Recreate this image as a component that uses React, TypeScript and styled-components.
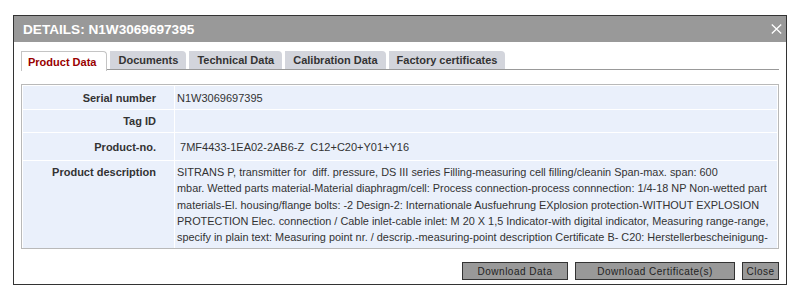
import { FC } from "react"
import styled, { createGlobalStyle } from "styled-components"

const GlobalStyle = createGlobalStyle`
  html, body {
    margin: 0;
    padding: 0;
    background: #ffffff;
    font-family: "Liberation Sans", Arial, sans-serif;
  }
`

// #region styled
const Page = styled.div`
  padding: 15px 0 0 13px;
`

const Dialog = styled.div`
  width: 772px;
  border: 1px solid #333333;
  background: #ffffff;
  display: flex;
  flex-direction: column;
`

const TitleBar = styled.div`
  height: 26px;
  background: #999999;
  display: flex;
  align-items: center;
  justify-content: space-between;
  padding: 0 4px 0 9px;
`

const Title = styled.h1`
  margin: 0;
  color: #ffffff;
  font-size: 13.6px;
  font-weight: bold;
`

const CloseIcon = styled.button`
  width: 12px;
  height: 12px;
  padding: 0;
  margin-top: -1px;
  border: 0;
  background: none;
  display: flex;
  align-items: center;
  justify-content: center;
  cursor: pointer;
`

const Body = styled.div`
  padding: 8px 7px 4px 7px;
  display: flex;
  flex-direction: column;
`

const TabBar = styled.div`
  display: flex;
  gap: 3px;
  height: 19px;
  border-bottom: 1px solid #999999;
`

const Tab = styled.div<{ $active?: boolean }>`
  box-sizing: border-box;
  height: ${p => (p.$active ? "20px" : "18px")};
  margin-top: ${p => (p.$active ? "0" : "1px")};
  padding: ${p => (p.$active ? "0 10px 0 6px" : "0 8px")};
  display: flex;
  align-items: center;
  font-size: 11px;
  font-weight: bold;
  color: ${p => (p.$active ? "#990000" : "#333333")};
  background: ${p => (p.$active ? "#ffffff" : "#d3d5dc")};
  border: ${p => (p.$active ? "1px solid #c4c4c4" : "none")};
  border-bottom: none;
  border-radius: 0 4px 0 0;
  position: relative;
  bottom: ${p => (p.$active ? "-1px" : "0")};
`

const Table = styled.div`
  margin-top: 14px;
  border: 1px solid #b9b9b9;
  background: #ffffff;
  padding: 1px 1px 0 1px;
  display: grid;
  grid-template-columns: 151px 1fr;
  gap: 1px;
`

const Label = styled.div<{ $h: number; $top?: boolean }>`
  height: ${p => p.$h}px;
  background: #eaf0fb;
  display: flex;
  align-items: ${p => (p.$top ? "flex-start" : "center")};
  justify-content: flex-end;
  padding: ${p => (p.$top ? "3px" : "0")} 18px 0 0;
  box-sizing: border-box;
  font-size: 11px;
  font-weight: bold;
  color: #333333;
  line-height: 16px;
`

const Value = styled.div<{ $h: number; $top?: boolean }>`
  height: ${p => p.$h}px;
  background: #eaf0fb;
  display: flex;
  align-items: ${p => (p.$top ? "flex-start" : "center")};
  padding: ${p => (p.$top ? "3px" : "0")} 0 0 2px;
  box-sizing: border-box;
  font-size: 11px;
  color: #333333;
  line-height: 16px;
  white-space: pre;
  overflow: hidden;
`

const Description = styled.div`
  white-space: pre;
  font-size: 10.9px;
  line-height: 16.3px;
`

const Actions = styled.div`
  margin-top: 13px;
  display: flex;
  justify-content: flex-end;
  gap: 7px;
`

const ActionButton = styled.button<{ $w: number }>`
  width: ${p => p.$w}px;
  height: 18px;
  padding: 0;
  border: 1px solid #333333;
  background: #999999;
  color: #222222;
  font-family: "Liberation Sans", Arial, sans-serif;
  font-size: 10px;
  letter-spacing: 0.5px;
  cursor: pointer;
`
// #endregion

const descriptionLines = [
  "SITRANS P, transmitter for  diff. pressure, DS III series Filling-measuring cell filling/cleanin Span-max. span: 600",
  "mbar. Wetted parts material-Material diaphragm/cell: Process connection-process connnection: 1/4-18 NP Non-wetted part",
  "materials-El. housing/flange bolts: -2 Design-2: Internationale Ausfuehrung EXplosion protection-WITHOUT EXPLOSION",
  "PROTECTION Elec. connection / Cable inlet-cable inlet: M 20 X 1,5 Indicator-with digital indicator, Measuring range-range,",
  "specify in plain text: Measuring point nr. / descrip.-measuring-point description Certificate B- C20: Herstellerbescheinigung-",
]

const tabs = ["Product Data", "Documents", "Technical Data", "Calibration Data", "Factory certificates"]

const App: FC = () => (
  <>
    <GlobalStyle />
    <Page>
      <Dialog>
        <TitleBar>
          <Title>DETAILS: N1W3069697395</Title>
          <CloseIcon aria-label="Close">
            <svg width="11" height="10" viewBox="0 0 11 10">
              <path d="M0.8 0.5 L10.2 9.5 M10.2 0.5 L0.8 9.5" stroke="#ffffff" strokeWidth="1.3" fill="none" />
            </svg>
          </CloseIcon>
        </TitleBar>
        <Body>
          <TabBar>
            {tabs.map((t, i) => (
              <Tab key={t} $active={i === 0}>{t}</Tab>
            ))}
          </TabBar>
          <Table>
            <Label $h={23}>Serial number</Label>
            <Value $h={23}>N1W3069697395</Value>
            <Label $h={22}>Tag ID</Label>
            <Value $h={22} />
            <Label $h={27}>Product-no.</Label>
            <Value $h={27}> 7MF4433-1EA02-2AB6-Z  C12+C20+Y01+Y16</Value>
            <Label $h={87} $top>Product description</Label>
            <Value $h={87} $top>
              <Description>
                {descriptionLines.map(l => <div key={l}>{l}</div>)}
              </Description>
            </Value>
          </Table>
          <Actions>
            <ActionButton $w={106}>Download Data</ActionButton>
            <ActionButton $w={160}>Download Certificate(s)</ActionButton>
            <ActionButton $w={37}>Close</ActionButton>
          </Actions>
        </Body>
      </Dialog>
    </Page>
  </>
)

export default App
